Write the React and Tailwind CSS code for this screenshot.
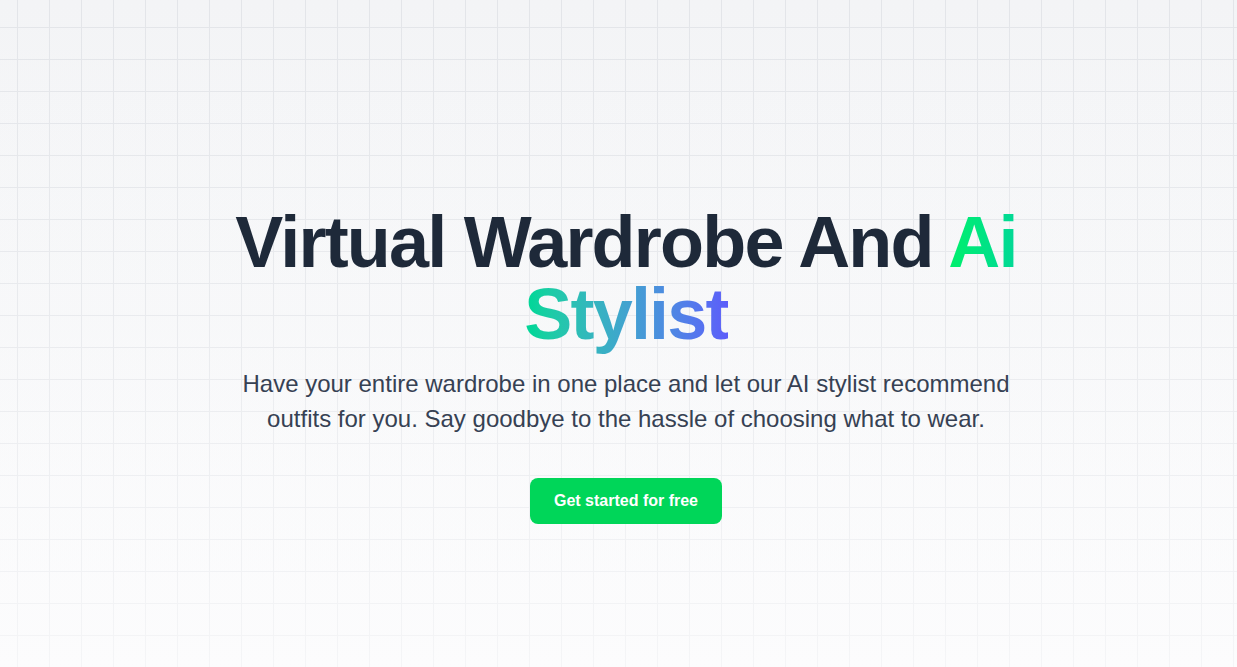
import React from "react";

// Hero with faint grid background
export default function App() {
  return (
    <div
      className="relative min-h-screen w-full overflow-hidden bg-gradient-to-b from-[#f3f4f6] to-[#fcfcfd]"
      style={{ fontFamily: '"Liberation Sans", Arial, sans-serif' }}
    >
      {/* Grid lines */}
      <div className="absolute inset-0 bg-[linear-gradient(to_right,#e3e5e9_1px,transparent_1px),linear-gradient(to_bottom,#e3e5e9_1px,transparent_1px)] bg-[size:32px_32px] bg-[position:17px_27px]" />
      {/* Fade overlay toward bottom */}
      <div className="absolute inset-0 bg-gradient-to-b from-transparent via-[#f8f9fa]/30 to-[#fcfcfd]/70" />

      <section className="relative flex flex-col items-center pl-[19px] pr-1 pt-[206px] text-center">
        <h1 className="max-w-[900px] text-7xl font-bold leading-none tracking-tight text-[#1e2939]">
          Virtual Wardrobe And{" "}
          <span className="bg-gradient-to-r from-[#00f06a] via-[#04d59a] via-28% to-[#5c5cfa] bg-clip-text text-transparent [box-decoration-break:slice]">
            Ai Stylist
          </span>
        </h1>
        <p className="mt-4 max-w-[790px] text-2xl leading-[35px] text-[#364153]">
          Have your entire wardrobe in one place and let our AI stylist recommend
          outfits for you. Say goodbye to the hassle of choosing what to wear.
        </p>
        <button className="mt-[42px] h-[46px] rounded-lg bg-[#00d659] px-6 text-base font-bold text-white">
          Get started for free
        </button>
      </section>
    </div>
  );
}
